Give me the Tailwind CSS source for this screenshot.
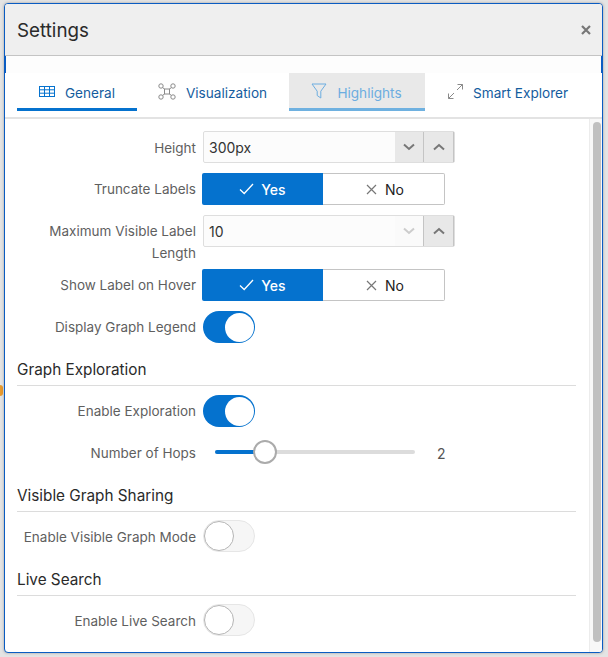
<!doctype html>
<html><head><meta charset="utf-8">
<script src="https://cdn.jsdelivr.net/npm/@tailwindcss/browser@4"></script>
</head>
<body class="w-[608px] h-[657px] overflow-hidden bg-[#e4e4e4] font-['Inter','Liberation_Sans',sans-serif]">
<div class="relative w-[608px] h-[657px] pt-[3px] pl-[4px] pr-[5px]">
  <div class="absolute left-0 top-[385px] w-[3px] h-[11px] rounded-r-full bg-[#e89a2c]"></div>
  <div class="relative h-[650px] rounded-[4px] border border-[#0a5cc2] bg-white overflow-hidden shadow-[0_0_3px_rgba(0,0,0,0.3)] flex flex-col">
    <div class="h-[52px] shrink-0 bg-[#efefef] border-b border-[#c4c4c4] flex items-center justify-between pl-[12px] pr-[11px]">
      <span class="text-[18.8px] text-[#2a2a2a] pt-[3px]">Settings</span>
      <svg width="10" height="10" viewBox="0 0 10 10" class="mt-[1px]"><path d="M1 1 9 9M9 1 1 9" stroke="#777" stroke-width="2.2"/></svg>
    </div>
    <div class="h-[17px] shrink-0 bg-[#fdfdfd] border-x border-[#0a5cc2]"></div>
    <div class="h-[46px] shrink-0 flex items-stretch pl-[12px] border-b-2 border-[#e3e3e3] bg-white text-[13.6px]">
      <div class="w-[120px] h-[38px] flex items-center justify-center gap-[10px] border-b-[3px] border-[#0572ce] text-[#145c9e] pt-[5px]">
        <svg width="16" height="11" viewBox="0 0 16 11" fill="none" stroke="#0572ce" stroke-width="1" class="mt-[-4px]"><rect x=".5" y=".5" width="15" height="10"/><path d="M.5 3.8h15M.5 7.2h15M5.5.5v10M10.5.5v10"/></svg>
        <span>General</span>
      </div>
      <div class="w-[152px] h-[38px] flex items-center justify-center gap-[10px] text-[#145c9e] pt-[3px] pr-[1px]">
        <svg width="18" height="17" viewBox="0 0 18 17" fill="none" stroke="#8a8a8a" stroke-width="1" class="mt-[-4px]"><circle cx="3" cy="3" r="2.2"/><circle cx="15" cy="3" r="2.2"/><circle cx="3" cy="14" r="2.2"/><circle cx="15" cy="14" r="2.2"/><rect x="6.5" y="6" width="5" height="5"/><path d="M4.6 4.6 6.5 6M13.4 4.6 11.5 6M4.6 12.4 6.5 11M13.4 12.4 11.5 11"/></svg>
        <span>Visualization</span>
      </div>
      <div class="w-[136px] h-[38px] flex items-center justify-center gap-[10px] bg-[#e9e9e9] border-b-[3px] border-[#6fb1e0] text-[#6cade0] pt-[5px] pr-[1px]">
        <svg width="16" height="16" viewBox="0 0 16 16" fill="none" stroke="#6cade0" stroke-width="1" class="mt-[-4px]"><path d="M1 1h14L9.8 8.2V15L6.2 12.5V8.2Z"/></svg>
        <span>Highlights</span>
      </div>
      <div class="flex-1 h-[38px] flex items-center pl-[23px] gap-[10px] text-[#145c9e] pt-[3px]">
        <svg width="15" height="15" viewBox="0 0 15 15" fill="none" stroke="#8a8a8a" stroke-width="1" class="mt-[-4px]"><path d="M9 6 14.5.5M9.5.5h5v5M6 9 .5 14.5M.5 9.5v5h5"/></svg>
        <span>Smart Explorer</span>
      </div>
    </div>
    <div class="relative flex-1 min-h-0 flex">
      <div class="w-[584px] pt-[12px] pl-[12px] pr-[13px] text-[13.5px] text-[#5f5f5f]">
        <div class="flex items-center h-[32px]">
          <label class="w-[179px] text-right mr-[7px] pt-[2px]">Height</label>
          <div class="w-[252px] h-[32px] rounded-[2px] border border-[#dedede] bg-[#fcfcfc] flex items-stretch text-[14px] text-[#333]">
            <span class="flex-1 flex items-center pl-[5px] pt-[1px]">300px</span>
            <span class="w-[29px] flex items-center justify-center bg-[#e8e8e8] border-r border-[#c4c4c4]"><svg width="12" height="8" viewBox="0 0 12 8" fill="none" stroke="#777" stroke-width="2"><path d="M1 1.5 6 6 11 1.5"/></svg></span>
            <span class="w-[30px] flex items-center justify-center bg-[#e8e8e8] border-r border-[#c4c4c4]"><svg width="12" height="8" viewBox="0 0 12 8" fill="none" stroke="#777" stroke-width="2"><path d="M1 6.5 6 2 11 6.5"/></svg></span>
          </div>
        </div>
        <div class="flex items-center h-[32px] mt-[10px]">
          <label class="w-[179px] text-right mr-[6px]">Truncate Labels</label>
          <div class="flex w-[243px] h-[32px] text-[14px]">
            <div class="w-[121px] rounded-l-[2px] bg-[#0572ce] text-white flex items-center justify-center gap-[7px] font-medium">
              <svg width="15" height="12" viewBox="0 0 15 12" fill="none" stroke="#fff" stroke-width="1.3"><path d="M1 6.5 5.2 10.5 14 1"/></svg><span>Yes</span>
            </div>
            <div class="flex-1 rounded-r-[2px] border border-l-0 border-[#c4c4c4] bg-white text-[#222] flex items-center justify-center gap-[8px] pl-[3px]">
              <svg width="11" height="11" viewBox="0 0 11 11" fill="none" stroke="#777" stroke-width="1.2"><path d="M1 1 10 10M10 1 1 10"/></svg><span>No</span>
            </div>
          </div>
        </div>
        <div class="flex items-start h-[44px] mt-[10px]">
          <label class="w-[179px] text-right mr-[7px] leading-[22px] pt-[5px]">Maximum Visible Label Length</label>
          <div class="w-[252px] h-[32px] rounded-[2px] border border-[#dedede] bg-[#fcfcfc] flex items-stretch text-[14px] text-[#333]">
            <span class="flex-1 flex items-center pl-[5px] pt-[1px]">10</span>
            <span class="w-[29px] flex items-center justify-center bg-[#fafafa] border-r border-[#c4c4c4]"><svg width="12" height="8" viewBox="0 0 12 8" fill="none" stroke="#ccc" stroke-width="2"><path d="M1 1.5 6 6 11 1.5"/></svg></span>
            <span class="w-[30px] flex items-center justify-center bg-[#e8e8e8] border-r border-[#c4c4c4]"><svg width="12" height="8" viewBox="0 0 12 8" fill="none" stroke="#777" stroke-width="2"><path d="M1 6.5 6 2 11 6.5"/></svg></span>
          </div>
        </div>
        <div class="flex items-center h-[32px] mt-[10px]">
          <label class="w-[179px] text-right mr-[6px]">Show Label on Hover</label>
          <div class="flex w-[243px] h-[32px] text-[14px]">
            <div class="w-[121px] rounded-l-[2px] bg-[#0572ce] text-white flex items-center justify-center gap-[7px] font-medium">
              <svg width="15" height="12" viewBox="0 0 15 12" fill="none" stroke="#fff" stroke-width="1.3"><path d="M1 6.5 5.2 10.5 14 1"/></svg><span>Yes</span>
            </div>
            <div class="flex-1 rounded-r-[2px] border border-l-0 border-[#c4c4c4] bg-white text-[#222] flex items-center justify-center gap-[8px] pl-[3px]">
              <svg width="11" height="11" viewBox="0 0 11 11" fill="none" stroke="#777" stroke-width="1.2"><path d="M1 1 10 10M10 1 1 10"/></svg><span>No</span>
            </div>
          </div>
        </div>
        <div class="flex items-center h-[32px] mt-[10px]">
          <label class="w-[179px] text-right mr-[7px]">Display Graph Legend</label>
          <div class="w-[52px] h-[32px] rounded-full bg-[#0572ce] flex justify-end items-center pr-[1px]"><span class="w-[29px] h-[29px] rounded-full bg-white"></span></div>
        </div>
        <h3 class="mt-[16px] h-[26px] text-[15.3px] leading-[22px] text-[#2a2a2a]">Graph Exploration</h3>
        <div class="h-px bg-[#dcdcdc]"></div>
        <div class="flex items-center h-[32px] mt-[9px]">
          <label class="w-[179px] text-right mr-[7px]">Enable Exploration</label>
          <div class="w-[52px] h-[32px] rounded-full bg-[#0572ce] flex justify-end items-center pr-[1px]"><span class="w-[29px] h-[29px] rounded-full bg-white"></span></div>
        </div>
        <div class="flex items-center h-[32px] mt-[9px]">
          <label class="w-[179px] text-right mr-[19px] pt-[2px]">Number of Hops</label>
          <div class="relative w-[200px] h-[4px] rounded-full bg-[#dcdcdc]">
            <div class="w-[50px] h-[4px] rounded-l-full bg-[#0572ce]"></div>
            <div class="absolute left-[38px] top-[-10px] w-[24px] h-[24px] rounded-full bg-white border-2 border-[#ababab]"></div>
          </div>
          <span class="ml-[22px] pt-[2px] text-[14px] text-[#555]">2</span>
        </div>
        <h3 class="mt-[17px] h-[26px] text-[15.3px] leading-[22px] text-[#2a2a2a]">Visible Graph Sharing</h3>
        <div class="h-px bg-[#dcdcdc]"></div>
        <div class="flex items-center h-[32px] mt-[8px]">
          <label class="w-[179px] text-right mr-[7px] pt-[2px] whitespace-nowrap">Enable Visible Graph Mode</label>
          <div class="w-[52px] h-[32px] rounded-full bg-[#f6f6f6] border border-[#e6e6e6] flex items-center"><span class="w-[30px] h-[30px] rounded-full bg-white border border-[#b5b5b5]"></span></div>
        </div>
        <h3 class="mt-[17px] h-[26px] text-[15.3px] leading-[22px] text-[#2a2a2a]">Live Search</h3>
        <div class="h-px bg-[#dcdcdc]"></div>
        <div class="flex items-center h-[32px] mt-[8px]">
          <label class="w-[179px] text-right mr-[7px] pt-[2px]">Enable Live Search</label>
          <div class="w-[52px] h-[32px] rounded-full bg-[#f6f6f6] border border-[#e6e6e6] flex items-center"><span class="w-[30px] h-[30px] rounded-full bg-white border border-[#b5b5b5]"></span></div>
        </div>
      </div>
      <div class="flex-1 bg-[#f8f8f8] border-l border-[#ececec] pl-[3px] pt-[3px]">
        <div class="w-[8px] h-[520px] rounded-full bg-[#c0c0c0]"></div>
      </div>
    </div>
  </div>
</div>
</body></html>
